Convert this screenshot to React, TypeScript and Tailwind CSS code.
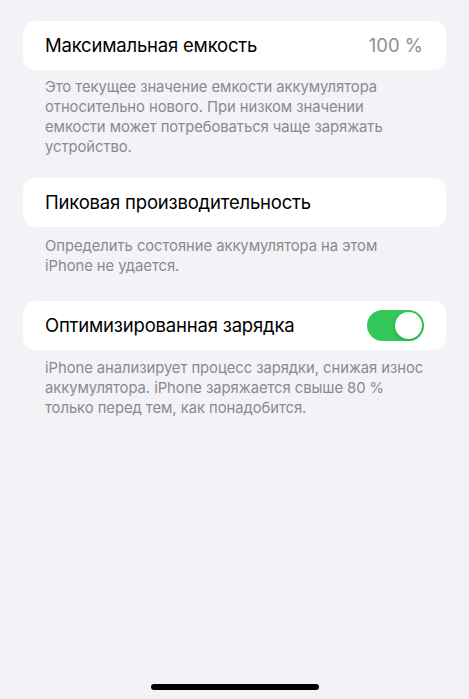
import React from 'react';

const font = { fontFamily: 'Inter, "Noto Sans", "Liberation Sans", sans-serif' };

function Row({ label, children }: { label: string; children?: React.ReactNode }) {
  return (
    <div className="mx-[23px] h-[49px] rounded-[12px] bg-white flex items-center justify-between pl-[22px] pr-[23px]">
      <span className="text-[18.5px] text-black tracking-[-0.2px]">{label}</span>
      {children}
    </div>
  );
}

function Footer({ className, children }: { className: string; children: React.ReactNode }) {
  return (
    <p className={`ml-[45px] mr-[20px] whitespace-nowrap text-[14.8px] leading-[20px] text-[#8a8a8e] tracking-[-0.05px] ${className}`}>
      {children}
    </p>
  );
}

function Toggle() {
  return (
    <div className="w-[57px] h-[31px] rounded-full bg-[#34c759] flex items-center justify-end pr-[2px] -mr-[1px]">
      <div className="w-[27px] h-[27px] rounded-full bg-white shadow-[0_2px_4px_rgba(0,0,0,0.15)]" />
    </div>
  );
}

export default function App() {
  return (
    <div className="w-[469px] h-[699px] bg-[#f2f2f7] flex flex-col pt-[21px] overflow-hidden" style={font}>
      <Row label="Максимальная емкость">
        <span className="text-[18.5px] text-[#8e8e93]">100 %</span>
      </Row>
      <Footer className="mt-[7px]">
        Это текущее значение емкости аккумулятора
        <br />
        относительно нового. При низком значении
        <br />
        емкости может потребоваться чаще заряжать
        <br />
        устройство.
      </Footer>

      <div className="mt-[21px]">
        <Row label="Пиковая производительность" />
      </div>
      <Footer className="mt-[9px]">
        Определить состояние аккумулятора на этом
        <br />
        iPhone не удается.
      </Footer>

      <div className="mt-[25px]">
        <Row label="Оптимизированная зарядка">
          <Toggle />
        </Row>
      </div>
      <Footer className="mt-[8px]">
        iPhone анализирует процесс зарядки, снижая износ
        <br />
        аккумулятора. iPhone заряжается свыше 80 %
        <br />
        только перед тем, как понадобится.
      </Footer>

      {/* home indicator */}
      <div className="mt-auto mb-[9px] flex justify-center">
        <div className="w-[168px] h-[6px] rounded-full bg-black" />
      </div>
    </div>
  );
}
